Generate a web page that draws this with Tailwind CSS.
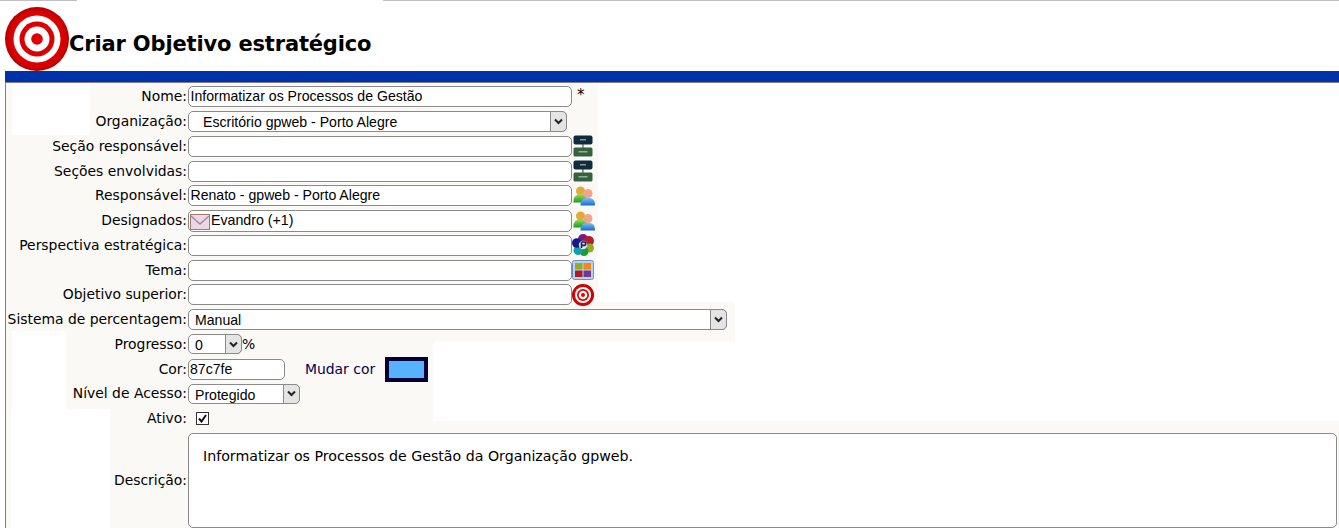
<!DOCTYPE html>
<html lang="pt">
<head>
<meta charset="utf-8">
<title>Criar Objetivo estratégico</title>
<script src="https://cdn.jsdelivr.net/npm/@tailwindcss/browser@4"></script>
</head>
<body class="h-[528px] overflow-hidden bg-white text-black font-['DejaVu_Sans',sans-serif] text-[13.900px]">
<svg width="0" height="0" class="absolute">
  <defs>
    <radialGradient id="r1"><stop offset="0.7" stop-color="#e40000"/><stop offset="0.9" stop-color="#d00000"/><stop offset="1" stop-color="#b00000"/></radialGradient>
    <linearGradient id="gb" x1="0" y1="0" x2="0" y2="1"><stop offset="0" stop-color="#7cc0f4"/><stop offset="1" stop-color="#1c68c8"/></linearGradient>
    <linearGradient id="gg" x1="0" y1="0" x2="0" y2="1"><stop offset="0" stop-color="#8ae060"/><stop offset="1" stop-color="#1f9a20"/></linearGradient>
    <symbol id="org" viewBox="0 0 20 22">
      <rect x="9.200" y="8" width="1.400" height="6" fill="#5a7a6a"/>
      <rect x="0.500" y="0.500" width="19" height="9" rx="2" fill="#0f2c3c"/>
      <rect x="7" y="4" width="6" height="1.500" fill="#7f979f"/>
      <rect x="0.500" y="12.500" width="19" height="9" rx="1.500" fill="#34613f"/>
      <rect x="5.500" y="16" width="9" height="1.500" fill="#8fb094"/>
    </symbol>
    <symbol id="ppl" viewBox="0 0 22 20">
      <circle cx="7.500" cy="5" r="4.500" fill="#e6a838"/>
      <path d="M0.500 15c0-5 3-6.500 7-6.500s7 1.500 7 6.500v1.500h-14z" fill="url(#gg)"/>
      <circle cx="15" cy="7.500" r="4.500" fill="#f2a58c"/>
      <path d="M7.500 19.500c0-6 3-7.500 7.500-7.500s7 1.500 7 7.500z" fill="url(#gb)"/>
    </symbol>
    <symbol id="persp" viewBox="0 0 22 22">
      <circle cx="11" cy="5" r="5" fill="#7a1c7c"/>
      <circle cx="17" cy="7" r="5" fill="#b0202c"/>
      <circle cx="17.500" cy="14" r="4.500" fill="#9aa81e"/>
      <circle cx="12" cy="17.500" r="4.500" fill="#1e9a3a"/>
      <circle cx="6" cy="16.500" r="4.500" fill="#18a0a8"/>
      <circle cx="4.800" cy="9" r="4.800" fill="#101c88"/>
      <circle cx="11" cy="11" r="4.200" fill="#dfe4ee"/>
      <path d="M9.500 8v6M9.500 8h2.500a1.600 1.600 0 0 1 0 3.400H9.500" stroke="#14206a" stroke-width="1.600" fill="none"/>
    </symbol>
    <symbol id="tema" viewBox="0 0 22 20">
      <rect x="0.500" y="0.500" width="21" height="19" rx="2" fill="#bcd0ea" stroke="#6c8fc4"/>
      <rect x="3" y="3" width="7.500" height="6.500" fill="#8fae28"/>
      <rect x="11.500" y="3" width="7.500" height="6.500" fill="#f08a10"/>
      <rect x="3" y="10.500" width="7.500" height="6.500" fill="#a81c2c"/>
      <rect x="11.500" y="10.500" width="7.500" height="6.500" fill="#6a3c98"/>
    </symbol>
    <symbol id="tgt" viewBox="0 0 64 64">
      <circle cx="32" cy="32" r="32" fill="url(#r1)"/>
      <circle cx="32" cy="32" r="23.500" fill="#fff"/>
      <circle cx="32" cy="32" r="17.500" fill="#dc0000"/>
      <circle cx="32" cy="32" r="12.500" fill="#fff"/>
      <circle cx="32" cy="32" r="5.800" fill="#e00000"/>
    </symbol>
  </defs>
</svg>

<div class="flex h-px">
  <div class="w-[77px] bg-[#c0c0c0]"></div>
  <div class="w-[306px]"></div>
  <div class="flex-1 bg-[#c0c0c0]"></div>
</div>

<header class="h-[70px] pl-[5px] flex">
  <svg class="w-[64px] h-[64px] mt-[5.500px] shrink-0"><use href="#tgt"/></svg>
  <h1 class="font-bold text-[21px] leading-[25px] mt-[31px] font-['DejaVu_Sans',sans-serif] tracking-[-0.16px]">Criar Objetivo estratégico</h1>
</header>

<div class="ml-[5px] h-[11px] bg-[#0033aa]"></div>
<div class="ml-[5px] h-px bg-[#808080]"></div>

<main class="ml-[5px] border-l border-[#808080] relative h-[445px]">
  <!-- background patches of the table cells -->
  <div class="absolute left-0 top-0 w-[592px] h-[219px] bg-[#faf9f5]"></div>
  <div class="absolute left-0 top-[219px] w-[729px] h-[40px] bg-[#faf9f5]"></div>
  <div class="absolute left-0 top-[259px] w-[427px] h-[79px] bg-[#faf9f5]"></div>
  <div class="absolute left-0 top-[338px] right-0 h-[107px] bg-[#faf9f5]"></div>
  <div class="absolute left-[6px] top-px w-[78px] h-[51px] bg-white"></div>
  <div class="absolute left-[6px] top-[248px] w-[54px] h-[78px] bg-white"></div>
  <div class="absolute left-[5px] top-[326px] w-[99px] h-[119px] bg-white"></div>

  <form class="relative flex flex-col pt-[1.500px]">
    <div class="flex items-center h-[24.750px]">
      <label class="w-[181px] text-right">Nome:</label>
      <input value="Informatizar os Processos de Gestão" class="ml-px w-[384px] h-[21px] border border-[#8a8a8a] rounded-[5px] bg-white px-[1.500px] font-['Liberation_Sans',sans-serif] text-[14.100px] text-black">
      <span class="ml-[5px] -mt-[3px] text-[15px]">*</span>
    </div>
    <div class="flex items-center h-[24.750px]">
      <label class="w-[181px] text-right">Organização:</label>
      <div class="ml-px relative w-[379px] h-[21px]">
        <select class="appearance-none w-full h-full border border-[#8a8a8a] rounded-[5px] bg-white pl-[14px] font-['Liberation_Sans',sans-serif] text-[14.100px] text-black"><option>Escritório gpweb - Porto Alegre</option></select>
        <div class="absolute right-0 top-0 w-[17px] h-full flex items-center justify-center bg-[#e4e4e4] border border-[#8a8a8a] rounded-r-[5px]"><svg class="w-[9px] h-[7px]" viewBox="0 0 9 7"><path d="M1 1.500l3.500 3.500L8 1.500" fill="none" stroke="#222" stroke-width="2"/></svg></div>
      </div>
    </div>
    <div class="flex items-center h-[24.750px]">
      <label class="w-[181px] text-right">Seção responsável:</label>
      <input class="ml-px w-[384px] h-[21px] border border-[#8a8a8a] rounded-[5px] bg-white">
      <svg class="ml-px w-[20px] h-[22px]"><use href="#org"/></svg>
    </div>
    <div class="flex items-center h-[24.750px]">
      <label class="w-[181px] text-right">Seções envolvidas:</label>
      <input class="ml-px w-[384px] h-[21px] border border-[#8a8a8a] rounded-[5px] bg-white">
      <svg class="ml-px w-[20px] h-[22px]"><use href="#org"/></svg>
    </div>
    <div class="flex items-center h-[24.750px]">
      <label class="w-[181px] text-right">Responsável:</label>
      <input value="Renato - gpweb - Porto Alegre" class="ml-px w-[384px] h-[21px] border border-[#8a8a8a] rounded-[5px] bg-white px-[1.500px] font-['Liberation_Sans',sans-serif] text-[14.100px] text-black">
      <svg class="ml-px w-[22px] h-[20px]"><use href="#ppl"/></svg>
    </div>
    <div class="flex items-center h-[24.750px]">
      <label class="w-[181px] text-right">Designados:</label>
      <div class="ml-px w-[384px] h-[22px] border border-[#8a8a8a] rounded-[5px] bg-white pl-px flex items-start font-['Liberation_Sans',sans-serif] text-[14.200px] leading-[18px]">
        <svg class="w-[20px] h-[16px] mt-[3px] shrink-0" viewBox="0 0 20 16"><rect x="0.500" y="0.500" width="19" height="15" fill="#ead8e8" stroke="#a87868"/><path d="M1 2l9 8 9-8" fill="none" stroke="#a88898" stroke-width="1.500"/></svg>
        <span class="ml-px">Evandro (+1)</span>
      </div>
      <svg class="ml-px w-[22px] h-[20px]"><use href="#ppl"/></svg>
    </div>
    <div class="flex items-center h-[24.750px]">
      <label class="w-[181px] text-right">Perspectiva estratégica:</label>
      <input class="ml-px w-[384px] h-[21px] border border-[#8a8a8a] rounded-[5px] bg-white">
      <svg class="w-[22px] h-[22px]"><use href="#persp"/></svg>
    </div>
    <div class="flex items-center h-[24.750px]">
      <label class="w-[181px] text-right">Tema:</label>
      <input class="ml-px w-[384px] h-[21px] border border-[#8a8a8a] rounded-[5px] bg-white">
      <svg class="w-[22px] h-[20px]"><use href="#tema"/></svg>
    </div>
    <div class="flex items-center h-[24.750px]">
      <label class="w-[181px] text-right">Objetivo superior:</label>
      <input class="ml-px w-[384px] h-[21px] border border-[#8a8a8a] rounded-[5px] bg-white">
      <svg class="w-[22px] h-[22px]"><use href="#tgt"/></svg>
    </div>
    <div class="flex items-center h-[24.750px]">
      <label class="w-[181px] text-right">Sistema de percentagem:</label>
      <div class="ml-px relative w-[539px] h-[21px]">
        <select class="appearance-none w-full h-full border border-[#8a8a8a] rounded-[5px] bg-white pl-[6px] font-['Liberation_Sans',sans-serif] text-[14.100px] text-black"><option>Manual</option></select>
        <div class="absolute right-0 top-0 w-[17px] h-full flex items-center justify-center bg-[#e4e4e4] border border-[#8a8a8a] rounded-r-[5px]"><svg class="w-[9px] h-[7px]" viewBox="0 0 9 7"><path d="M1 1.500l3.500 3.500L8 1.500" fill="none" stroke="#222" stroke-width="2"/></svg></div>
      </div>
    </div>
    <div class="flex items-center h-[24.750px]">
      <label class="w-[181px] text-right">Progresso:</label>
      <div class="ml-px relative w-[54px] h-[20px]">
        <select class="appearance-none w-full h-full border border-[#8a8a8a] rounded-[5px] bg-white pl-[6px] font-['Liberation_Sans',sans-serif] text-[14.100px] text-black"><option>0</option></select>
        <div class="absolute right-0 top-0 w-[17px] h-full flex items-center justify-center bg-[#e4e4e4] border border-[#8a8a8a] rounded-r-[5px]"><svg class="w-[9px] h-[7px]" viewBox="0 0 9 7"><path d="M1 1.500l3.500 3.500L8 1.500" fill="none" stroke="#222" stroke-width="2"/></svg></div>
      </div>
      <span>%</span>
    </div>
    <div class="flex items-center h-[24.750px]">
      <label class="w-[181px] text-right">Cor:</label>
      <input value="87c7fe" class="ml-px w-[97px] h-[21px] border border-[#8a8a8a] rounded-[5px] bg-white px-px font-['Liberation_Sans',sans-serif] text-[14.100px] text-black">
      <a class="ml-[20px] text-[#000050]">Mudar cor</a>
      <span class="ml-[10px] w-[43px] h-[25px] border-[4px] border-[#000033] bg-[#56b2ff]"></span>
    </div>
    <div class="flex items-center h-[24.750px]">
      <label class="w-[181px] text-right">Nível de Acesso:</label>
      <div class="ml-px relative w-[112px] h-[20px]">
        <select class="appearance-none w-full h-full border border-[#8a8a8a] rounded-[5px] bg-white pl-[6px] font-['Liberation_Sans',sans-serif] text-[14.100px] text-black"><option>Protegido</option></select>
        <div class="absolute right-0 top-0 w-[17px] h-full flex items-center justify-center bg-[#e4e4e4] border border-[#8a8a8a] rounded-r-[5px]"><svg class="w-[9px] h-[7px]" viewBox="0 0 9 7"><path d="M1 1.500l3.500 3.500L8 1.500" fill="none" stroke="#222" stroke-width="2"/></svg></div>
      </div>
    </div>
    <div class="flex items-center h-[24.750px]">
      <label class="w-[181px] text-right">Ativo:</label>
      <span class="ml-[9px] w-[13px] h-[13px] border border-[#333] bg-white flex items-center justify-center"><svg class="w-[9px] h-[9px]" viewBox="0 0 9 9"><path d="M1 4.500l2.500 3L8 1" fill="none" stroke="#111" stroke-width="2"/></svg></span>
    </div>
    <div class="flex items-center mt-[2px]">
      <label class="w-[181px] text-right">Descrição:</label>
      <div class="ml-px w-[1149px] h-[95px] border border-[#8a8a8a] rounded-[5px] bg-white pl-[14px] pt-[13px] leading-[18px] text-[14.200px]">Informatizar os Processos de Gestão da Organização gpweb.</div>
    </div>
  </form>
</main>
</body>
</html>
